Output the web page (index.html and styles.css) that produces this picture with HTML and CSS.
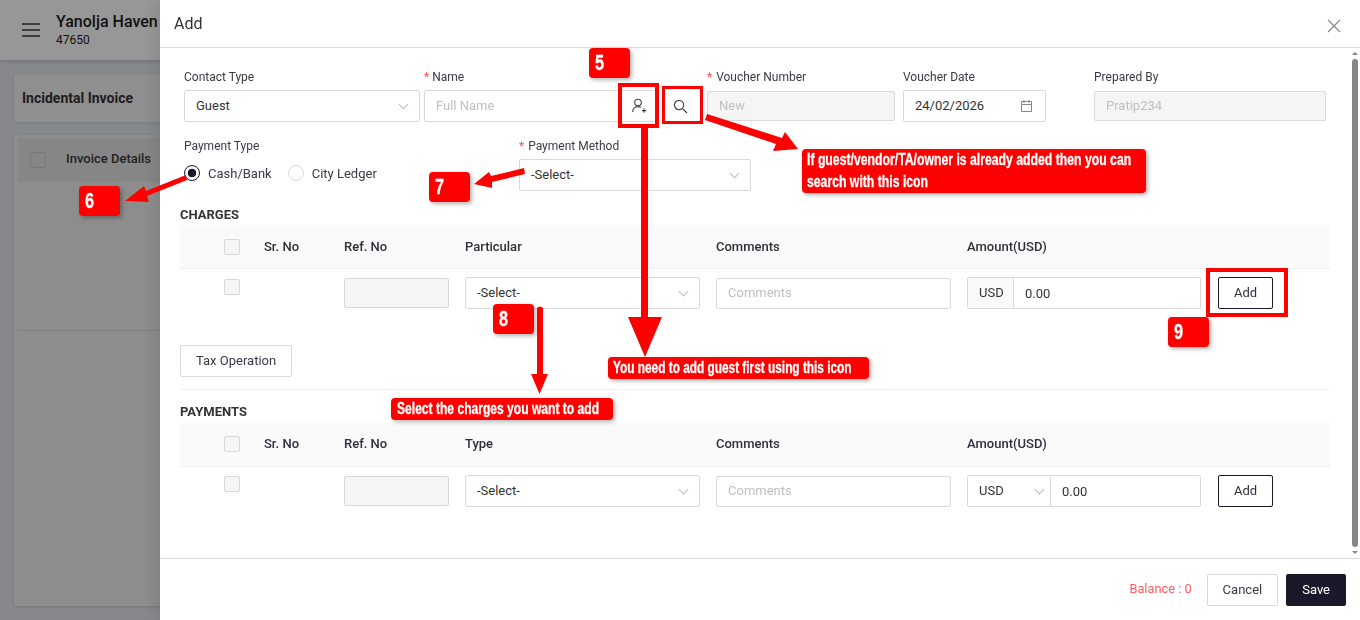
FILE: index.html
```html
<!DOCTYPE html>
<html>
    <head>
        <meta charset="utf-8">
        <title>Incidental Invoice</title>
        <link rel="stylesheet" href="styles.css">
    </head>
    <body>
        <!-- page behind the drawer -->
        <div class="page">
            <div class="topbar">
                <svg class="menu-icon" width="20" height="16" viewBox="0 0 20 16">
                    <path d="M1 2h18M1 8h18M1 14h18" stroke="#222" stroke-width="1.6" fill="none" />
                </svg>
                <div>
                    <div class="hotel-name">Yanolja Haven</div>
                    <div class="hotel-code">47650</div>
                </div>
            </div>
            <div class="page-title">Incidental Invoice</div>
            <div class="page-card">
                <div class="page-head">
                    <span class="page-check"></span>
                    <span class="page-head-text">Invoice Details</span>
                </div>
                <div class="page-row"></div>
            </div>
        </div>

        <!-- drawer -->
        <div class="drawer">
            <div class="drawer-head">
                <span>Add</span>
                <svg width="14" height="14" viewBox="0 0 14 14">
                    <path d="M1 1l12 12M13 1L1 13" stroke="#888" stroke-width="1.2" fill="none" />
                </svg>
            </div>

            <div class="drawer-body">
                <div class="form-row">
                    <div class="field f-contact">
                        <label>Contact Type</label>
                        <div class="input select">Guest<i class="chev"></i></div>
                    </div>
                    <div class="field f-name">
                        <label><b>*</b> Name</label>
                        <div class="name-wrap">
                            <div class="input name-input">
                                <span class="ph">Full Name</span>
                                <svg class="add-user" width="16" height="16" viewBox="0 0 16 16" fill="none" stroke="#444" stroke-width="1.1">
                                    <circle cx="7" cy="4.6" r="3.3" />
                                    <path d="M1.6 14c0-3.2 2-5.4 5.400-5.400 1.200 0 2.200.3 3 .8M11 12.600h4.200M13.100 10.500v4.200" />
                                </svg>
                            </div>
                            <div class="input search-btn">
                                <svg width="15" height="15" viewBox="0 0 15 15" fill="none" stroke="#444" stroke-width="1.2">
                                    <circle cx="6" cy="6" r="4.6" />
                                    <path d="M9.400 9.400l4.600 4.600" />
                                </svg>
                            </div>
                        </div>
                    </div>
                    <div class="field f-voucher">
                        <label><b>*</b> Voucher Number</label>
                        <div class="input disabled">New</div>
                    </div>
                    <div class="field f-date">
                        <label>Voucher Date</label>
                        <div class="input select">24/02/2026
                            <svg class="cal" width="13" height="14" viewBox="0 0 13 14" fill="none" stroke="#888">
                                <path d="M1.500 2.500h10v10h-10zM1.500 5.500h10M4 1v3M9 1v3" />
                            </svg>
                        </div>
                    </div>
                    <div class="field f-prepared">
                        <label>Prepared By</label>
                        <div class="input disabled">Pratip234</div>
                    </div>
                </div>

                <div class="form-row second">
                    <div class="field f-paytype">
                        <label>Payment Type</label>
                        <div class="radios">
                            <span class="radio on"></span><span>Cash/Bank</span>
                            <span class="radio"></span><span>City Ledger</span>
                        </div>
                    </div>
                    <div class="field f-method">
                        <label><b>*</b> Payment Method</label>
                        <div class="input select">-Select-<i class="chev"></i></div>
                    </div>
                </div>

                <div class="section-title">CHARGES</div>
                <div class="line-grid line-head">
                    <span class="check"></span>
                    <span>Sr. No</span>
                    <span>Ref. No</span>
                    <span>Particular</span>
                    <span>Comments</span>
                    <span>Amount(USD)</span>
                </div>
                <div class="line-grid line-row">
                    <span class="check"></span>
                    <span></span>
                    <div class="input disabled"></div>
                    <div class="input select">-Select-<i class="chev"></i></div>
                    <div class="input comment-input"><span class="ph">Comments</span></div>
                    <div class="amount">
                        <span class="prefix">USD</span>
                        <span class="amount-val">0.00</span>
                    </div>
                    <div class="btn-add">Add</div>
                </div>

                <div class="tax-wrap">
                    <div class="btn tax-btn">Tax Operation</div>
                </div>

                <div class="section-title payments">PAYMENTS</div>
                <div class="line-grid line-head">
                    <span class="check"></span>
                    <span>Sr. No</span>
                    <span>Ref. No</span>
                    <span>Type</span>
                    <span>Comments</span>
                    <span>Amount(USD)</span>
                </div>
                <div class="line-grid line-row">
                    <span class="check"></span>
                    <span></span>
                    <div class="input disabled"></div>
                    <div class="input select">-Select-<i class="chev"></i></div>
                    <div class="input comment-input"><span class="ph">Comments</span></div>
                    <div class="amount">
                        <span class="prefix select-prefix">USD<i class="chev"></i></span>
                        <span class="amount-val">0.00</span>
                    </div>
                    <div class="btn-add">Add</div>
                </div>

                <div class="scrollbar">
                    <i class="sb-up"></i>
                    <i class="sb-thumb"></i>
                    <i class="sb-down"></i>
                </div>
            </div>

            <div class="drawer-foot">
                <span class="balance">Balance : 0</span>
                <div class="btn">Cancel</div>
                <div class="btn save">Save</div>
            </div>
        </div>

        <!-- tutorial annotations on top of the screenshot -->
        <svg class="arrows" width="1360" height="620" viewBox="0 0 1360 620">
            <g fill="#f00" stroke="none">
                <path d="M186 175L146 191 144 186 125 201 149 202 147 196 187 180z" />
                <path d="M524 168L491 176 489 172 474 184 492 188 492 182 525 174z" />
                <path d="M707 114L782 138 785 132 798 149 773 151 776 144 705 120z" />
                <path d="M641 127h7v190h14l-17 40-17-40h13z" />
                <path d="M537 308q3-3 6 0v66h5l-8.500 20-8.500-20h6z" />
            </g>
        </svg>
        <div class="mark mark-user"></div>
        <div class="mark mark-search"></div>
        <div class="mark mark-add"></div>
        <div class="badge b5"><span>5</span></div>
        <div class="badge b6"><span>6</span></div>
        <div class="badge b7"><span>7</span></div>
        <div class="badge b8"><span>8</span></div>
        <div class="badge b9"><span>9</span></div>
        <div class="note n-search"><span>If guest/vendor/TA/owner is already added then you can</span><br><span>search with this icon</span></div>
        <div class="note n-guest"><span>You need to add guest first using this icon</span></div>
        <div class="note n-charges"><span>Select the charges you want to add</span></div>
    </body>
</html>
```

FILE: styles.css
```css
* {
    box-sizing: border-box;
}

body {
    margin: 0;
    height: 620px;
    overflow: hidden;
    font-family: Roboto, "Liberation Sans", sans-serif;
    font-size: 13px;
    color: #2f2f3a;
    background: #86888b;
}

/* page behind the drawer */
.page {
    height: 620px;
    padding-right: 1200px;
}

.topbar {
    height: 60px;
    display: flex;
    align-items: center;
    gap: 15px;
    padding-left: 21px;
    background: #979797;
    box-shadow: 0 1px 4px rgba(0, 0, 0, 0.2);
    color: #111;
    overflow: hidden;
    white-space: nowrap;
}

.menu-icon {
    flex: none;
}

.hotel-name {
    font-size: 16px;
    font-weight: 500;
    line-height: 20px;
}

.hotel-code {
    font-size: 12px;
    line-height: 16px;
}

.page-title {
    margin: 14px 0 0 14px;
    height: 48px;
    line-height: 48px;
    padding-left: 8px;
    background: #8f8f8f;
    border-radius: 3px 0 0 3px;
    box-shadow: 0 1px 3px rgba(0, 0, 0, 0.12);
    color: #1d1d1d;
    font-size: 14px;
    font-weight: 700;
    white-space: nowrap;
}

.page-card {
    margin: 13px 0 0 14px;
    height: 471px;
    background: #8d8d8d;
    padding-top: 3px;
    border-radius: 3px 0 0 3px;
    box-shadow: 0 1px 3px rgba(0, 0, 0, 0.12);
}

.page-head {
    margin-left: 4px;
    height: 44px;
    display: flex;
    align-items: center;
    gap: 20px;
    padding-left: 12px;
    background: #868686;
    font-weight: 500;
    font-size: 13px;
    color: #222;
    white-space: nowrap;
    overflow: hidden;
}

.page-head-text {
    margin-top: -3px;
}

.page-check {
    flex: none;
    width: 16px;
    height: 16px;
    border: 1px solid #777;
    border-radius: 2px;
}

.page-row {
    height: 149px;
    margin-left: 4px;
    border-bottom: 1px solid #7f7f7f;
}

/* drawer */
.drawer {
    position: fixed;
    top: 0;
    left: 160px;
    width: 1200px;
    height: 620px;
    background: #fff;
    display: flex;
    flex-direction: column;
    box-shadow: -6px 0 12px rgba(0, 0, 0, 0.08);
}

.drawer-head {
    flex: none;
    height: 48px;
    display: flex;
    align-items: center;
    justify-content: space-between;
    padding: 0 19px 0 14px;
    border-bottom: 1px solid #d9d9d9;
    font-size: 16px;
    color: #333;
}

.drawer-head svg {
    margin-top: 5px;
}

.drawer-body {
    flex: none;
    position: relative;
    height: 511px;
    padding: 22px 30px 0 20px;
    border-bottom: 1px solid #d9d9d9;
}

.form-row {
    display: flex;
}

.second {
    margin-top: 17px;
    height: 52px;
}

.field label {
    display: block;
    height: 20px;
    font-size: 12px;
    line-height: 15px;
    color: #3a3a46;
    white-space: nowrap;
}

.field label b {
    color: #ff4d4f;
    font-weight: 400;
}

.f-voucher label b,
.f-method label b {
    margin-right: 1px;
}

.f-contact { width: 236px; margin-left: 4px; margin-right: 4px; }
.f-name { width: 278px; margin-right: 5px; }
.f-voucher { width: 188px; margin-right: 8px; }
.f-date { width: 143px; margin-right: 48px; }
.f-prepared { width: 232px; }
.f-paytype { width: 335px; margin-left: 4px; }
.f-method { width: 232px; }

.input {
    height: 32px;
    display: flex;
    align-items: center;
    padding: 0 11px 2px;
    background: #fff;
    border: 1px solid #d9d9d9;
    border-radius: 2px;
    font-size: 13px;
    color: #333;
    min-width: 0;
}

.ph {
    color: #bfbfbf;
}

.select {
    justify-content: space-between;
    position: relative;
}

.chev {
    width: 7px;
    height: 7px;
    margin: -2px 1px 0 0;
    border-right: 1px solid #bbb;
    border-bottom: 1px solid #bbb;
    transform: rotate(45deg);
}

.disabled {
    background: #f5f5f5;
    color: #bfbfbf;
    height: 30px;
    margin-top: 1px;
}

.comment-input {
    height: 31px;
    margin-top: 1px;
}

.name-wrap {
    display: flex;
    gap: 5px;
}

.name-input {
    width: 234px;
    justify-content: space-between;
    padding: 0 10px 0 11px;
}

.name-input .ph {
    margin-bottom: 2px;
}

.search-btn {
    width: 39px;
    justify-content: center;
    padding: 0 4px 0 0;
    border: none;
}

.cal {
    margin: 2px 1px 0 0;
}

.radios {
    display: flex;
    align-items: center;
    height: 16px;
    margin-top: 6px;
    font-size: 13px;
    color: #3a3a46;
}

.radio {
    width: 16px;
    height: 16px;
    margin-right: 8px;
    border: 1px solid #d9d9d9;
    border-radius: 50%;
    background: #fff;
}

.radio.on {
    border-color: #1b1829;
    background: radial-gradient(circle, #1b1829 0 4px, #fff 4.6px);
}

.radios span:nth-child(2) {
    margin-right: 16px;
}

.section-title {
    margin-top: 16px;
    height: 18px;
    font-size: 13px;
    font-weight: 700;
    line-height: 16px;
    color: #333;
}

.payments {
    height: 20px;
    margin-top: 0;
    padding-top: 1px;
}

.line-grid {
    display: grid;
    grid-template-columns: 24px 64px 105px 235px 235px 235px 55px;
    column-gap: 16px;
    padding-left: 44px;
}

.line-head {
    height: 44px;
    align-items: center;
    background: #fafafa;
    border-bottom: 1px solid #f0f0f0;
    font-weight: 500;
    font-size: 13px;
    color: #2f2f3a;
}

.payments + .line-head {
    padding-bottom: 2px;
}

.line-row {
    padding-top: 8px;
    height: 48px;
}

.check {
    width: 16px;
    height: 16px;
    background: #f5f5f5;
    border: 1px solid #d9d9d9;
    border-radius: 2px;
}

.line-row .check {
    margin-top: 2px;
}

.payments ~ .line-row .check {
    margin-top: 1px;
}

.amount {
    height: 32px;
    margin-right: 1px;
    display: flex;
    border: 1px solid #d9d9d9;
    border-radius: 2px;
    font-size: 13px;
    color: #333;
}

.prefix {
    width: 46px;
    display: flex;
    align-items: center;
    padding: 0 0 2px 11px;
    font-size: 13px;
    background: #fafafa;
    border-right: 1px solid #d9d9d9;
}

.select-prefix {
    width: 83px;
    background: #fff;
    justify-content: space-between;
    padding-right: 6px;
}

.amount-val {
    padding-left: 11px;
    line-height: 31px;
}

.btn-add {
    height: 32px;
    line-height: 30px;
    text-align: center;
    border: 1px solid #1b1829;
    border-radius: 2px;
    color: #2f2f3a;
    font-size: 13px;
    white-space: nowrap;
}

.tax-wrap {
    margin-top: 28px;
    height: 45px;
    border-bottom: 1px solid #f0f0f0;
    margin-bottom: 13px;
}

.btn {
    height: 32px;
    line-height: 30px;
    padding: 0 15px;
    border: 1px solid #d9d9d9;
    border-radius: 2px;
    background: #fff;
    color: #3a3a46;
    font-size: 13px;
}

.tax-btn {
    width: 112px;
    white-space: nowrap;
}

.scrollbar {
    position: absolute;
    top: 4px;
    right: 2px;
    bottom: 4px;
    width: 6px;
    display: flex;
    flex-direction: column;
    align-items: center;
}

.sb-thumb {
    flex: 1;
    width: 6px;
    margin: 4px 0;
    background: #878787;
    border-radius: 3px;
}

.sb-up, .sb-down {
    width: 0;
    height: 0;
    border-left: 3px solid transparent;
    border-right: 3px solid transparent;
}

.sb-up {
    border-bottom: 3px solid #888;
}

.sb-down {
    border-top: 3px solid #888;
}

.drawer-foot {
    flex: 1;
    display: flex;
    align-items: center;
    justify-content: flex-end;
    gap: 8px;
    padding: 0 14px 0 0;
}

.balance {
    color: #ff5a5f;
    font-size: 12.8px;
    margin: 0 7px 2px 0;
}

.save {
    background: #1b1829;
    border-color: #1b1829;
    color: #fff;
}

/* annotations */
.arrows {
    position: absolute;
    top: 0;
    left: 0;
    pointer-events: none;
}

.mark {
    position: absolute;
    border: 4px solid #f00;
}

.mark-user { left: 618px; top: 83px; width: 41px; height: 45px; }
.mark-search { left: 662px; top: 86px; width: 41px; height: 38px; border-width: 3px; }
.mark-add { left: 1206px; top: 268px; width: 82px; height: 49px; }

.badge, .note {
    position: absolute;
    background: #f00;
    color: #fff;
    border-radius: 4px;
    box-shadow: 2px 2px 4px rgba(0, 0, 0, 0.3);
    font-family: "Liberation Sans", sans-serif;
    font-weight: 700;
}

/* no condensed display font here, so the text is squeezed */
.badge span, .note span {
    display: inline-block;
    transform-origin: left center;
    transform: scaleX(0.74);
    -webkit-text-stroke: 0.3px #fff;
}

.n-search span { transform: scaleX(0.765); }
.n-charges span { transform: scaleX(0.755); }

.badge {
    width: 41px;
    height: 30px;
    padding-left: 6px;
    font-size: 22px;
    line-height: 29px;
}

.b5 { left: 589px; top: 48px; }
.b6 { left: 79px; top: 186px; }
.b7 { left: 429px; top: 172px; }
.b8 { left: 493px; top: 304px; }
.b9 { left: 1168px; top: 317px; }

.note {
    padding-left: 5px;
    font-size: 16px;
    white-space: nowrap;
}

.n-charges { padding-left: 6px; }

.n-search { left: 802px; top: 149px; width: 344px; height: 44px; line-height: 22px; }
.n-guest { left: 608px; top: 357px; width: 261px; height: 22px; line-height: 22px; }
.n-charges { left: 391px; top: 398px; width: 222px; height: 22px; line-height: 22px; }
```
